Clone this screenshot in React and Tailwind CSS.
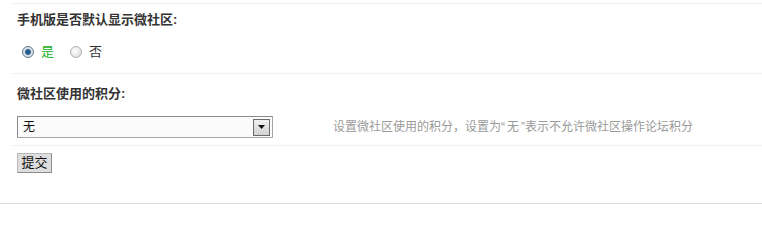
export default function App() {
  const font = { fontFamily: '"Liberation Sans", "Noto Sans CJK SC", sans-serif' };

  return (
    <div className="w-[762px] h-[207px] bg-white text-[#333]" style={font}>
      <div className="pt-[3px] pl-[12px] border-b border-[#dcdcdc]">
        {/* 手机版是否默认显示微社区 */}
        <div className="border-t border-[#f1f1f1] pl-[5px] pt-[6px] pb-[11px]">
          <div className="h-[20px] leading-[20px] text-[13px] font-bold text-[#333]">
            手机版是否默认显示微社区:
          </div>
          <div className="mt-[12px] h-[20px] flex items-center text-[13px] pl-[5px]">
            <span className="w-[12px] h-[12px] rounded-full border border-[#5c6f83] bg-[radial-gradient(circle_at_50%_50%,#1d4f7c_0,#2d6a9c_2.5px,#d8dfe7_3.5px,#f4f6f8_100%)]" />
            <span className="ml-[7px] text-[#19b019]">是</span>
            <span className="ml-[16px] w-[12px] h-[12px] rounded-full border border-[#b3b3b3] bg-[radial-gradient(circle_at_40%_40%,#ffffff_0,#e2e2e2_70%,#cfcfcf_100%)]" />
            <span className="ml-[7px] text-[#333]">否</span>
          </div>
        </div>

        {/* 微社区使用的积分 */}
        <div className="border-t border-[#f1f1f1] pl-[5px] pt-[10px] pb-[7px]">
          <div className="h-[20px] leading-[20px] text-[13px] font-bold text-[#333]">
            微社区使用的积分:
          </div>
          <div className="mt-[12px] flex items-center">
            <div className="w-[256px] h-[22px] flex items-center justify-between border border-[#a5a5a5] border-t-[#8a8a8a] border-l-[#8a8a8a] bg-[#fbfbfb] pl-[5px] pr-[2px]">
              <span className="text-[12px] text-[#111]">无</span>
              <span className="w-[17px] h-[17px] flex items-center justify-center border border-[#6b6b6b] bg-[linear-gradient(#f0f0f0,#d2d2d2)]">
                <svg width="7" height="4" viewBox="0 0 7 4">
                  <path d="M0 0h7L3.5 4z" fill="#111" />
                </svg>
              </span>
            </div>
            <span className="ml-[60px] text-[12px] text-[#9a9a9a]">
              设置微社区使用的积分，设置为“<span className="mx-[2px]">无</span>”表示不允许微社区操作论坛积分
            </span>
          </div>
        </div>

        {/* 提交 */}
        <div className="border-t border-[#f1f1f1] pl-[5px] pt-[7px] pb-[30px]">
          <button className="w-[35px] h-[20px] flex items-center justify-center border border-[#8c8c8c] border-t-[#b9b9b9] border-l-[#b9b9b9] bg-[#dedede] text-[13px] text-[#111]">
            提交
          </button>
        </div>
      </div>
    </div>
  );
}
